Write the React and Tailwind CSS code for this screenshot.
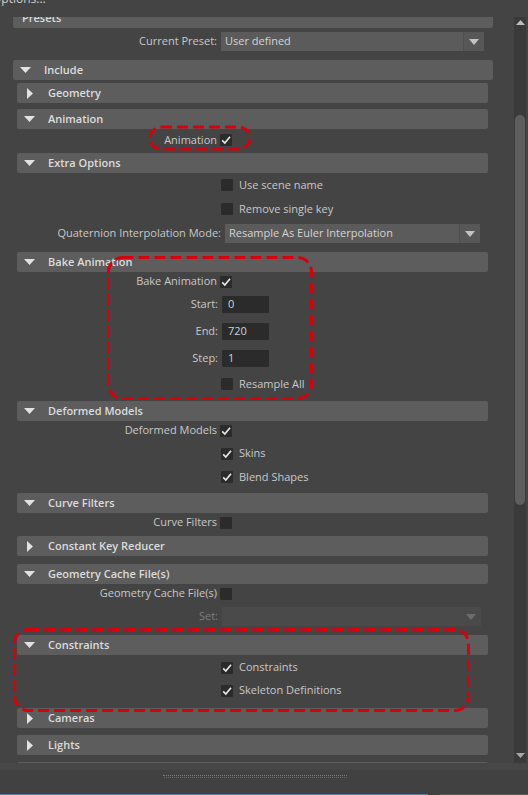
import React from 'react'

const font = { fontFamily: '"Open Sans", "Noto Sans", sans-serif' }

const Tri = ({ open }) => open ? (
    <svg width="11" height="6" viewBox="0 0 11 6"><path d="M0 0H11L5.5 6Z" fill="#e2e2e2" /></svg>
) : (
    <svg width="6" height="11" viewBox="0 0 6 11"><path d="M0 0L6 5.5L0 11Z" fill="#e2e2e2" /></svg>
)

// frame header bar
const Header = ({ title, open = true, nested = true, mt = '' }) => (
    <div className={`${mt} flex items-center h-[20px] shrink-0 bg-[#5d5d5d] rounded-[2px] ${nested ? 'ml-[17px] w-[471px]' : 'ml-[13px] w-[480px]'}`}>
        <div className="w-[11px] ml-[7px] flex justify-center">
            <Tri open={open} />
        </div>
        <span className="ml-[13px] text-[11px] font-semibold text-[#dcdcdc]">{title}</span>
    </div>
)

const Check = ({ on }) => (
    <div className="w-[12px] h-[12px] shrink-0 bg-[#2b2b2b] rounded-[1px] flex items-center justify-center">
        {on && (
            <svg width="12" height="12" viewBox="0 0 12 12">
                <path d="M2.2 6.4L4.8 9L10 2.8" fill="none" stroke="#e6e6e6" strokeWidth="1.7" />
            </svg>
        )}
    </div>
)

// label on the left, box on the right
const LabelCheck = ({ label, on, h }) => (
    <div className={`${h} flex items-center shrink-0`}>
        <div className="w-[217px] text-right pr-0">{label}</div>
        <div className="ml-[3px]"><Check on={on} /></div>
    </div>
)

// box first, label after
const CheckLabel = ({ label, on, h }) => (
    <div className={`${h} flex items-center shrink-0`}>
        <div className="w-[221px]" />
        <Check on={on} />
        <span className="ml-[6px]">{label}</span>
    </div>
)

const Field = ({ label, value, h }) => (
    <div className={`${h} flex items-center shrink-0`}>
        <div className="w-[218px] text-right">{label}</div>
        <div className="ml-[4px] w-[47px] h-[17px] bg-[#2b2b2b] rounded-[1px] pl-[6px] flex items-center text-[#d2d2d2]">{value}</div>
    </div>
)

const Arrow = ({ color }) => (
    <svg width="10" height="6" viewBox="0 0 10 6"><path d="M0 0H10L5 6Z" fill={color} /></svg>
)

export default function App() {
    return (
        <div className="relative w-[528px] h-[795px] bg-[#444444] overflow-hidden text-[11px] text-[#c8c8c8] select-none" style={font}>
            {/* window title, mostly cut off */}
            <div className="h-[17px] overflow-hidden">
                <div className="mt-[-10px] ml-[-8px] text-[12px] text-[#d0d0d0]">Options...</div>
            </div>

            <div className="flex h-[746px]">
                {/* scrolling column */}
                <div className="w-[514px] overflow-hidden">
                    <div className="flex flex-col mt-[-9px]">
                        <div className="ml-[13px] w-[480px] h-[20px] bg-[#5d5d5d] rounded-[2px] flex items-center pl-[9px] text-[11px] font-semibold text-[#dcdcdc]">Presets</div>

                        <div className="mt-[4px] h-[19px] flex items-center shrink-0">
                            <div className="w-[217px] text-right">Current Preset:</div>
                            <div className="ml-[4px] w-[263px] h-[19px] bg-[#5b5b5b] flex items-center">
                                <span className="flex-1 pl-[4px] text-[#d4d4d4]">User defined</span>
                                <div className="w-[21px] h-full bg-[#575757] border-l border-[#505050] flex items-center justify-center"><Arrow color="#c4c4c4" /></div>
                            </div>
                        </div>

                        <Header title="Include" nested={false} mt="mt-[9px]" />
                        <Header title="Geometry" open={false} mt="mt-[3px]" />

                        <Header title="Animation" mt="mt-[6px]" />
                        <LabelCheck label="Animation" on h="h-[22px]" />

                        <Header title="Extra Options" mt="mt-[2px]" />
                        <CheckLabel label="Use scene name" h="h-[24px]" />
                        <CheckLabel label="Remove single key" h="h-[24px]" />
                        <div className="h-[25px] flex items-center shrink-0">
                            <div className="w-[221px] text-right">Quaternion Interpolation Mode:</div>
                            <div className="ml-[4px] w-[255px] h-[19px] bg-[#5b5b5b] flex items-center">
                                <span className="flex-1 pl-[4px] text-[#d4d4d4]">Resample As Euler Interpolation</span>
                                <div className="w-[21px] h-full bg-[#575757] border-l border-[#505050] flex items-center justify-center"><Arrow color="#c4c4c4" /></div>
                            </div>
                        </div>

                        <Header title="Bake Animation" mt="mt-[6px]" />
                        <LabelCheck label="Bake Animation" on h="h-[19px]" />
                        <Field label="Start:" value="0" h="h-[27px]" />
                        <Field label="End:" value="720" h="h-[27px]" />
                        <Field label="Step:" value="1" h="h-[27px]" />
                        <CheckLabel label="Resample All" h="h-[24px]" />

                        <Header title="Deformed Models" mt="mt-[5px]" />
                        <LabelCheck label="Deformed Models" on h="h-[19px]" />
                        <CheckLabel label="Skins" on h="h-[27px]" />
                        <CheckLabel label="Blend Shapes" on h="h-[20px]" />

                        <Header title="Curve Filters" mt="mt-[6px]" />
                        <LabelCheck label="Curve Filters" h="h-[19px]" />

                        <Header title="Constant Key Reducer" open={false} mt="mt-[4px]" />

                        <Header title="Geometry Cache File(s)" mt="mt-[8px]" />
                        <LabelCheck label="Geometry Cache File(s)" h="h-[19px]" />
                        <div className="h-[27px] flex items-center shrink-0">
                            <div className="w-[218px] text-right text-[#7c7c7c]">Set:</div>
                            <div className="ml-[4px] w-[259px] h-[19px] bg-[#4a4a4a] flex items-center justify-end">
                                <div className="w-[21px] flex justify-center"><Arrow color="#6c6c6c" /></div>
                            </div>
                        </div>

                        <Header title="Constraints" mt="mt-[5px]" />
                        <CheckLabel label="Constraints" on h="h-[25px]" />
                        <CheckLabel label="Skeleton Definitions" on h="h-[21px]" />

                        <Header title="Cameras" open={false} mt="mt-[7px]" />
                        <Header title="Lights" open={false} mt="mt-[7px]" />
                        <div className="mt-[7px] ml-[17px] w-[471px] h-[20px] bg-[#5d5d5d] rounded-[2px]" />
                    </div>
                </div>

                {/* scrollbar */}
                <div className="w-[12px] bg-[#3a3a3a] flex flex-col">
                    <div className="h-[11px] flex items-center justify-center">
                        <svg width="9" height="5" viewBox="0 0 9 5"><path d="M0 5H9L4.5 0Z" fill="#bdbdbd" /></svg>
                    </div>
                    <div className="mt-[87px] mx-[1px] h-[390px] bg-[#5e5e5e] rounded-t-[5px] rounded-b-[5px]" />
                    <div className="flex-1" />
                    <div className="h-[11px] flex items-start justify-center pt-[1px]">
                        <svg width="9" height="5" viewBox="0 0 9 5"><path d="M0 0H9L4.5 5Z" fill="#a8a8a8" /></svg>
                    </div>
                </div>
                <div className="w-[2px] bg-[#444444]" />
            </div>

            {/* bottom strip */}
            <div className="h-[7px] bg-[#474747]" />
            <div className="h-[25px] bg-[#414141] flex flex-col">
                <div className="mt-[5px] ml-[163px] w-[184px] border-t border-dotted border-[#7a7a7a]" />
                <div className="mt-[1px] ml-[164px] w-[183px] border-t border-dotted border-[#6a6a6a]" />
                <div className="flex-1" />
                <div className="flex h-[1px]">
                    <div className="w-[428px] bg-[#5f7f9f]" />
                    <div className="w-[12px]" />
                    <div className="flex-1 bg-[#5a5a5a]" />
                </div>
            </div>

            {/* red annotation marks drawn over the dialog */}
            <svg className="absolute left-0 top-0 pointer-events-none" width="528" height="795">
                <g fill="none" stroke="#d8000c" strokeWidth="3" strokeDasharray="11 5">
                    <rect x="150" y="127" width="100" height="22" rx="11" />
                    <rect x="108.5" y="257.5" width="203" height="141" rx="14" />
                    <rect x="14.5" y="629.5" width="454" height="81" rx="14" />
                </g>
            </svg>
        </div>
    )
}
